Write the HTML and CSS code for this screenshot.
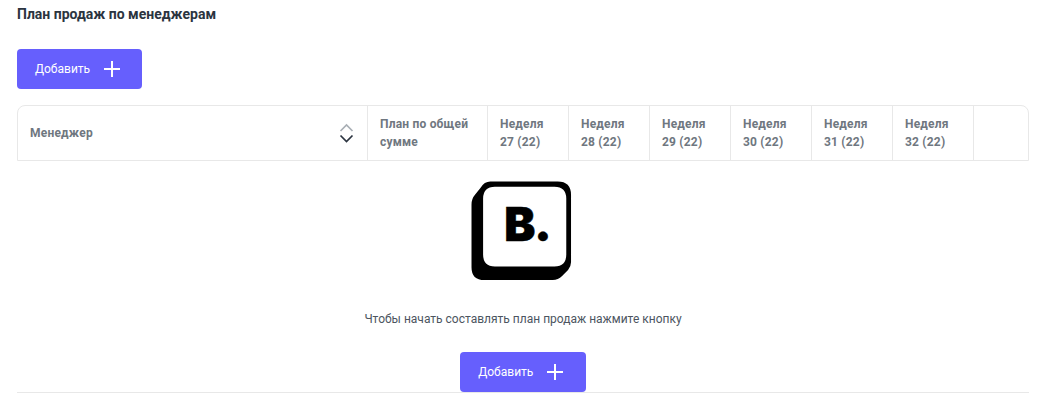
FILE: index.html
```html
<!DOCTYPE html>
<html>
  <head>
    <title>План продаж по менеджерам</title>
    <link rel="stylesheet" href="styles.css">
  </head>
  <body>
    <h1>План продаж по менеджерам</h1>

    <button class="btn">
      Добавить
      <svg class="plus" width="18" height="18" viewBox="0 0 18 18"><path d="M9 1v16M1 9h16" /></svg>
    </button>

    <div class="plan-table">
      <div class="cell manager">
        <span>Менеджер</span>
        <svg class="sort" width="16" height="20" viewBox="0 0 16 20">
          <path class="sort-up" d="M1.500 8l6-6 6 6" />
          <path class="sort-down" d="M1.500 12.500l6 6 6-6" />
        </svg>
      </div>
      <div class="cell total">План по общей сумме</div>
      <div class="cell week">Неделя<br>27 (22)</div>
      <div class="cell week">Неделя<br>28 (22)</div>
      <div class="cell week">Неделя<br>29 (22)</div>
      <div class="cell week">Неделя<br>30 (22)</div>
      <div class="cell week">Неделя<br>31 (22)</div>
      <div class="cell week">Неделя<br>32 (22)</div>
      <div class="cell rest"></div>
    </div>

    <div class="empty">
      <svg class="logo" width="106" height="102" viewBox="0 0 106 102">
        <path fill-rule="evenodd" d="M20 1.500H88Q101.500 1.500 101.500 15V83Q101.500 87 98.500 91L92.500 97Q88.500 101 83 101H14Q1 101 1 88V25Q1 19 4.500 15L10 8Q14 1.500 20 1.500ZM24.700 6.700Q12.700 6.700 12.700 18.700V75.300Q12.700 87.300 24.700 87.300H84.700Q96.700 87.300 96.700 75.300V18.700Q96.700 6.700 84.700 6.700Z" />
        <text class="logo-text" x="34" y="61.500">B.</text>
      </svg>
      <p>Чтобы начать составлять план продаж нажмите кнопку</p>
      <button class="btn">
        Добавить
        <svg class="plus" width="18" height="18" viewBox="0 0 18 18"><path d="M9 1v16M1 9h16" /></svg>
      </button>
    </div>
  </body>
</html>
```

FILE: styles.css
```css
body {
  margin: 0;
  padding: 0 11px 0 17px;
  background-color: #fff;
  font-family: Roboto, sans-serif;
  color: #2b3440;
}

h1 {
  margin: 0;
  padding-top: 6px;
  font-size: 14px;
  line-height: 16px;
  font-weight: 700;
}

.btn {
  display: inline-flex;
  align-items: center;
  gap: 13px;
  width: 125.500px;
  height: 40px;
  padding: 0 0 0 18px;
  border: 0;
  border-radius: 4px;
  background-color: #665ffd;
  color: #fff;
  font-family: Roboto, sans-serif;
  font-size: 12px;
}

h1 + .btn {
  display: flex;
  width: 125px;
  margin-top: 27px;
}

.plus path {
  fill: none;
  stroke: #fff;
  stroke-width: 2;
}

.plan-table {
  display: flex;
  height: 56px;
  margin-top: 16px;
  box-sizing: border-box;
  border: 1px solid #e8e8e8;
  border-radius: 8px 8px 0 0;
}

.cell {
  box-sizing: border-box;
  display: flex;
  align-items: center;
  padding: 0 12px;
  border-right: 1px solid #e8e8e8;
  color: #6f7780;
  font-size: 12px;
  line-height: 18px;
  font-weight: 700;
  letter-spacing: 0.2px;
}

.manager {
  width: 350px;
  justify-content: space-between;
}

.total {
  width: 120px;
}

.week {
  display: block;
  width: 81px;
  padding-top: 9px;
}

.rest {
  flex: 1;
  border-right: 0;
}

.sort path {
  fill: none;
  stroke-width: 1.700;
}

.sort-up {
  stroke: #a9afb5;
}

.sort-down {
  stroke: #2b3440;
}

.empty {
  display: flex;
  flex-direction: column;
  align-items: center;
  height: 232px;
  box-sizing: border-box;
  padding-top: 19px;
  border-bottom: 1px solid #e8e8e8;
}

.logo {
  display: block;
}

.logo-text {
  font-family: Inter, sans-serif;
  font-size: 47px;
  font-weight: 900;
  letter-spacing: -1px;
  stroke: #000;
  stroke-width: 0.600;
}

.empty p {
  margin: 30px 0 0;
  font-size: 12px;
  line-height: 16px;
  color: #4c5560;
}

.empty .btn {
  margin-top: 25px;
  flex: none;
}
```
